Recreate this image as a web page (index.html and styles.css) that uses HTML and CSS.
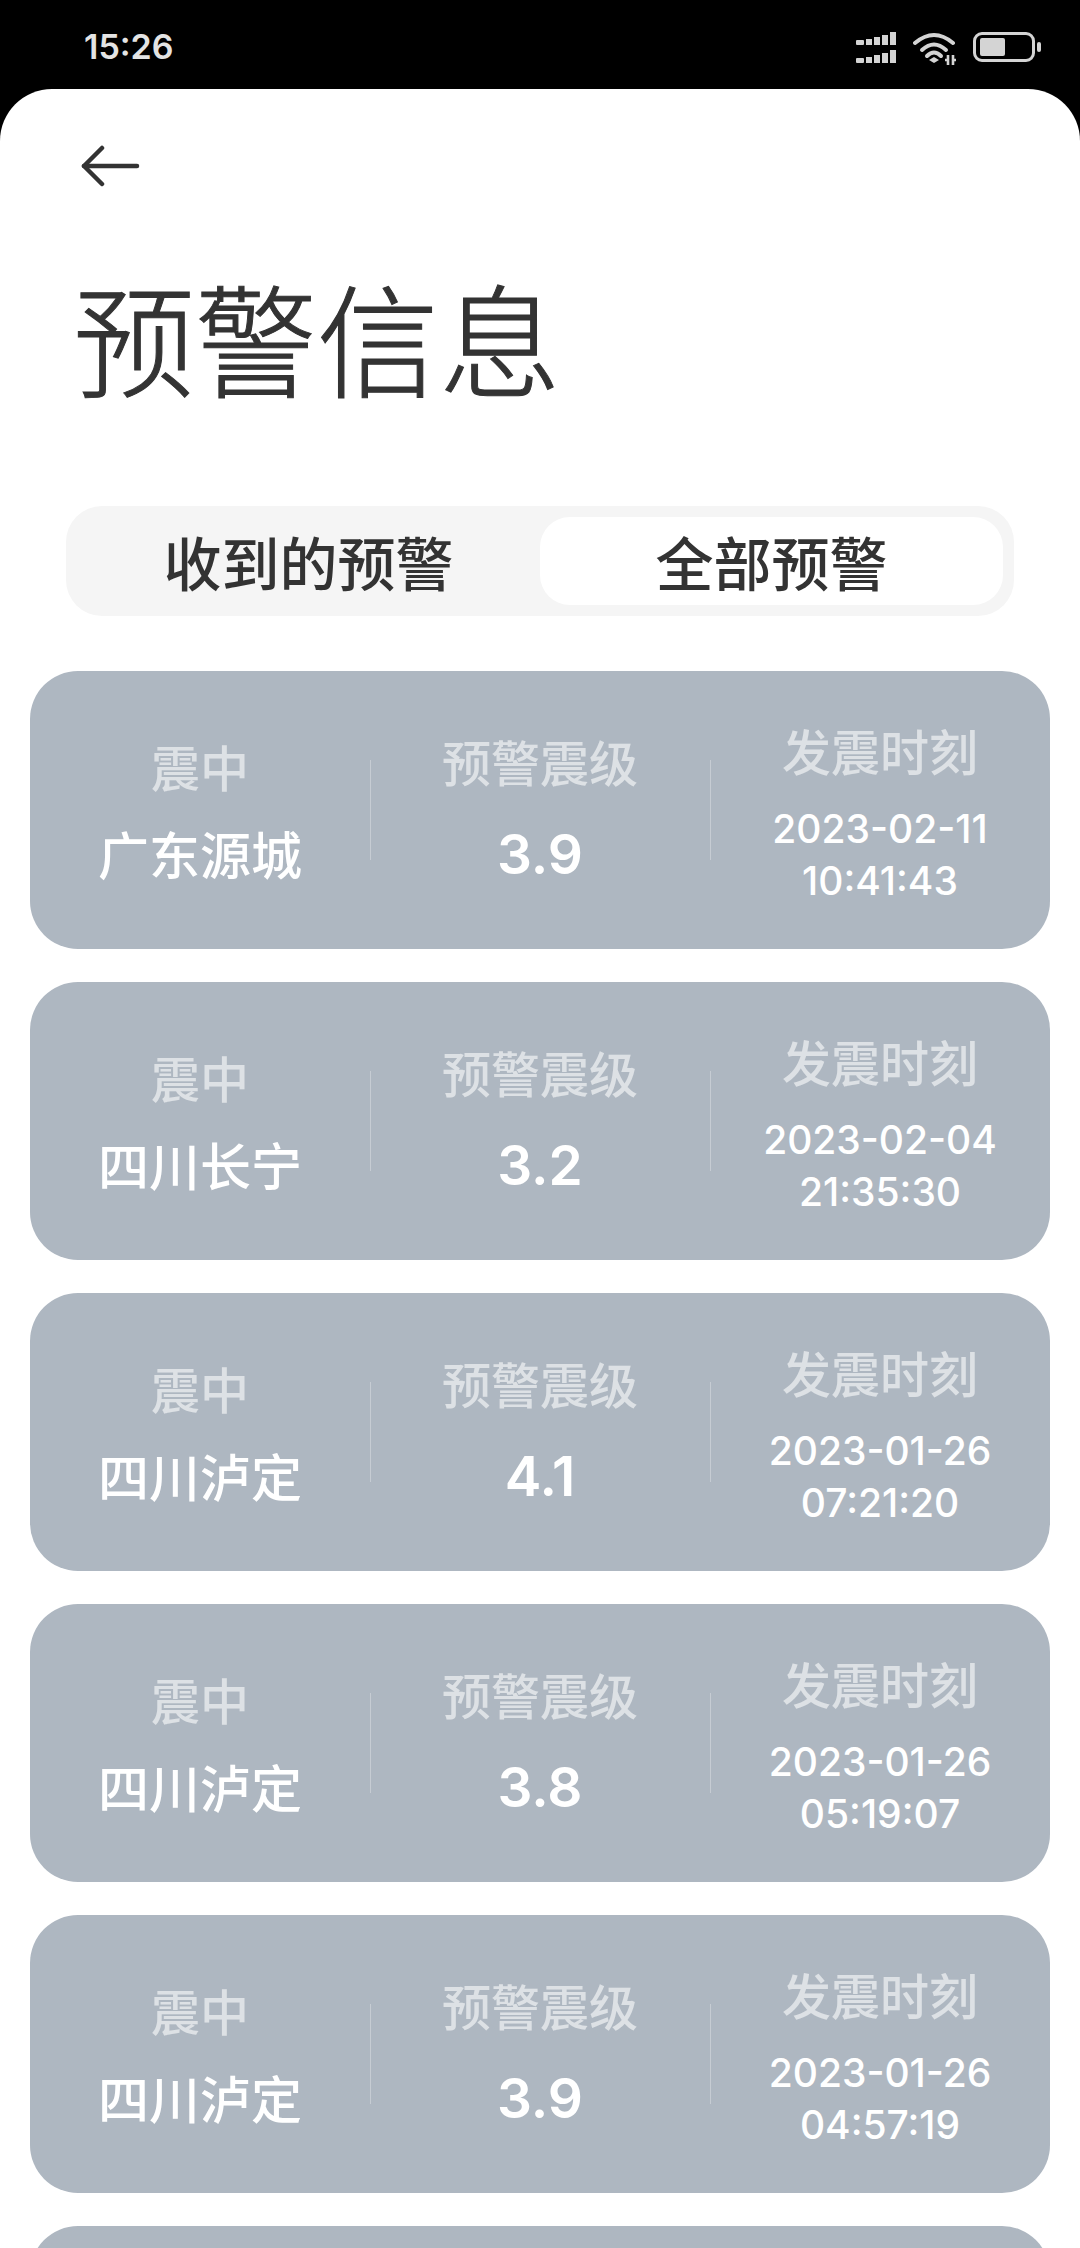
FILE: index.html
```html
<!DOCTYPE html>
<html>
  <head>
    <title>预警信息</title>
    <link rel="stylesheet" href="styles.css">
  </head>
  <body>
    <div class="status-bar">
      <span class="clock">15:26</span>
      <div class="status-icons">
        <svg class="signal" width="42" height="32" viewBox="0 0 42 32" fill="#d4d4d4">
          <rect x="1" y="8" width="8" height="5" rx="1"/>
          <rect x="11" y="7" width="6" height="6"/>
          <rect x="19" y="5" width="6" height="8"/>
          <rect x="27" y="3" width="6" height="10"/>
          <rect x="35" y="0" width="6" height="13"/>
          <rect x="1" y="26" width="8" height="5" rx="1"/>
          <rect x="11" y="25" width="6" height="6"/>
          <rect x="19" y="23" width="6" height="8"/>
          <rect x="27" y="21" width="6" height="10"/>
          <rect x="35" y="18" width="6" height="13"/>
        </svg>
        <svg class="wifi" width="44" height="34" viewBox="0 0 44 34" fill="none" stroke="#d4d4d4" stroke-width="4" stroke-linecap="round">
          <path d="M2 11Q21 -5 40 11"/>
          <path d="M9 18Q21 7 33 18"/>
          <path d="M14 24Q21 17 28 24"/>
          <path d="M16 28L21 25L26 28L21 31Z" fill="#d4d4d4" stroke="none"/>
          <path d="M35 23V33M40 23V33M32 28H35M40 28H43" stroke-width="2.6" stroke-linecap="butt"/>
        </svg>
        <div class="battery">
          <div class="battery-body"><div class="battery-fill"></div></div>
          <div class="battery-nub"></div>
        </div>
      </div>
    </div>

    <div class="sheet">
      <svg class="back" width="60" height="42" viewBox="0 0 60 42" fill="none" stroke="#333" stroke-width="4.5" stroke-linecap="round" stroke-linejoin="round">
        <path d="M21 3L3 21L21 39"/>
        <path d="M3 21H56"/>
      </svg>

      <h1 class="title">预警信息</h1>

      <div class="tabs">
        <div class="tab">收到的预警</div>
        <div class="tab active">全部预警</div>
      </div>

      <div class="card">
        <div class="col"><div class="label">震中</div><div class="place">广东源城</div></div>
        <div class="col mid"><div class="label">预警震级</div><div class="mag">3.9</div></div>
        <div class="col time"><div class="label">发震时刻</div><div class="date">2023-02-11<br>10:41:43</div></div>
      </div>
      <div class="card">
        <div class="col"><div class="label">震中</div><div class="place">四川长宁</div></div>
        <div class="col mid"><div class="label">预警震级</div><div class="mag">3.2</div></div>
        <div class="col time"><div class="label">发震时刻</div><div class="date">2023-02-04<br>21:35:30</div></div>
      </div>
      <div class="card">
        <div class="col"><div class="label">震中</div><div class="place">四川泸定</div></div>
        <div class="col mid"><div class="label">预警震级</div><div class="mag">4.1</div></div>
        <div class="col time"><div class="label">发震时刻</div><div class="date">2023-01-26<br>07:21:20</div></div>
      </div>
      <div class="card">
        <div class="col"><div class="label">震中</div><div class="place">四川泸定</div></div>
        <div class="col mid"><div class="label">预警震级</div><div class="mag">3.8</div></div>
        <div class="col time"><div class="label">发震时刻</div><div class="date">2023-01-26<br>05:19:07</div></div>
      </div>
      <div class="card">
        <div class="col"><div class="label">震中</div><div class="place">四川泸定</div></div>
        <div class="col mid"><div class="label">预警震级</div><div class="mag">3.9</div></div>
        <div class="col time"><div class="label">发震时刻</div><div class="date">2023-01-26<br>04:57:19</div></div>
      </div>
      <div class="card"></div>
    </div>
  </body>
</html>
```

FILE: styles.css
```css
html,
body {
  height: 100%;
}
body {
  margin: 0;
  height: 2248px;
  overflow: hidden;
  background-color: #000;
  font-family: Inter, "Noto Sans CJK SC", sans-serif;
}
.status-bar {
  height: 89px;
  box-sizing: border-box;
  padding: 0 39px 0 84px;
  display: flex;
  justify-content: space-between;
  align-items: flex-start;
}
.clock {
  margin-top: 27px;
  color: #e4e4e4;
  font-size: 34px;
  line-height: 40px;
  font-weight: 600;
}
.status-icons {
  margin-top: 32px;
  display: flex;
  align-items: flex-start;
  gap: 16px;
}
.battery {
  display: flex;
  align-items: center;
  gap: 2px;
}
.battery-body {
  width: 62px;
  height: 30px;
  box-sizing: border-box;
  border: 3px solid #d4d4d4;
  border-radius: 9px;
  padding: 3px 4px;
}
.battery-fill {
  width: 25px;
  height: 100%;
  background-color: #d4d4d4;
  border-radius: 2px;
}
.battery-nub {
  width: 4px;
  height: 10px;
  background-color: #d4d4d4;
  border-radius: 2px;
}
.sheet {
  background-color: #fff;
  border-radius: 52px 52px 0 0;
  padding: 56px 30px 0;
  height: 2159px;
  box-sizing: border-box;
  overflow: hidden;
}
.back {
  display: block;
  margin-left: 51px;
}
.title {
  margin: 82px 0 0 43px;
  color: #333;
  font-size: 122px;
  line-height: 150px;
  font-weight: 300;
  -webkit-text-stroke: 1px #333;
}
.tabs {
  margin: 87px 36px 55px;
  height: 110px;
  box-sizing: border-box;
  padding: 11px;
  display: flex;
  background-color: #f5f5f5;
  border-radius: 36px;
}
.tab {
  flex: 1;
  display: flex;
  align-items: center;
  justify-content: center;
  color: #333;
  font-size: 58px;
  font-weight: 500;
  border-radius: 30px;
}
.tab.active {
  background-color: #fff;
}
.card {
  height: 278px;
  margin-bottom: 33px;
  display: flex;
  background-color: #aeb7c1;
  border-radius: 48px;
}
.col {
  width: 340px;
  box-sizing: border-box;
  padding-top: 6px;
  display: flex;
  flex-direction: column;
  align-items: center;
  justify-content: center;
  text-align: center;
  color: #fff;
  position: relative;
}
.col + .col::before {
  content: "";
  position: absolute;
  left: 0;
  top: 89px;
  width: 1px;
  height: 100px;
  background-color: #c6ccd3;
}
.label {
  color: #dde1e5;
  font-size: 49px;
  line-height: 60px;
  font-weight: 500;
}
.place {
  margin-top: 27px;
  font-size: 51px;
  line-height: 60px;
  font-weight: 500;
}
.mid {
  padding-top: 4px;
}
.mag {
  margin-top: 24px;
  font-size: 55px;
  line-height: 70px;
  font-weight: 600;
}
.time {
  padding-top: 11px;
}
.date {
  margin-top: 19px;
  font-size: 39px;
  line-height: 52px;
  font-weight: 500;
}
```
